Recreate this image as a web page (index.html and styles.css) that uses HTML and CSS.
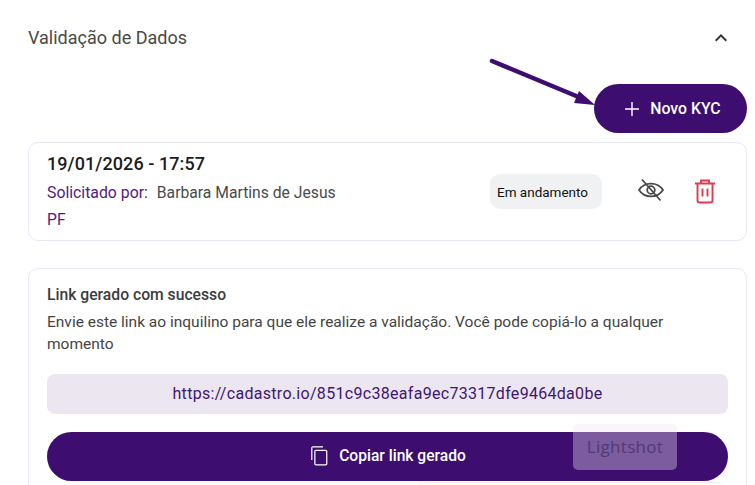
FILE: index.html
```html
<!DOCTYPE html>
<html lang="pt">
<head>
<meta charset="utf-8">
<title>Validação de Dados</title>
<link rel="stylesheet" href="styles.css">
</head>
<body>
<main class="panel">
  <header class="head">
    <h2 class="head-title">Validação de Dados</h2>
    <svg class="chevron" viewBox="0 0 24 24" width="24" height="24"><path d="M7.400 15.400 12 10.800l4.600 4.600L18 14l-6-6-6 6z" fill="#333"/></svg>
  </header>
  <div class="actions">
    <button class="new-btn">
      <svg viewBox="0 0 24 24" width="24" height="24"><path d="M19 12.700h-6.300V19h-1.400v-6.300H5v-1.400h6.300V5h1.400v6.300H19z" fill="#fff"/></svg>
      <span>Novo KYC</span>
    </button>
  </div>
  <section class="card kyc">
    <div class="kyc-info">
      <div class="kyc-date">19/01/2026 - 17:57</div>
      <div class="kyc-line"><span class="purple kyc-label">Solicitado por:</span><span class="kyc-name">Barbara Martins de Jesus</span></div>
      <div class="purple kyc-type">PF</div>
    </div>
    <div class="status">Em andamento</div>
    <svg class="eye" viewBox="0 0 26 26" width="26" height="26" fill="none" stroke="#4a4a4a" stroke-width="1.800"><path d="M1 13c2.800-4.300 6.800-6.400 12-6.400s9.200 2.100 12 6.400c-2.800 4.300-6.800 6.400-12 6.400S3.800 17.300 1 13z"/><circle cx="13" cy="13" r="3.800"/><path d="M4 2.500 22.500 23.500"/></svg>
    <svg class="trash" viewBox="0 0 24 26" width="24" height="26" fill="none" stroke="#dc3c50" stroke-width="1.900"><path d="M2 5.500h20M8 5.500V2.500h8v3M4.500 5.500v17q0 2 2 2h11q2 0 2-2v-17M9.500 10.500v8M14.500 10.500v8"/></svg>
  </section>
  <section class="card link-card">
    <h3 class="link-title">Link gerado com sucesso</h3>
    <p class="link-text">Envie este link ao inquilino para que ele realize a validação. Você pode copiá-lo a qualquer momento</p>
    <div class="link-url">https://cadastro.io/851c9c38eafa9ec73317dfe9464da0be</div>
    <button class="copy-btn">
      <svg viewBox="0 0 24 24" width="21" height="21"><path d="M16 1.500H4.500C3.400 1.500 2.500 2.400 2.500 3.500V17h1.400V2.900H16V1.500zm3 4H8C6.900 5.500 6 6.400 6 7.500v14c0 1.100.9 2 2 2h11c1.100 0 2-.9 2-2v-14c0-1.100-.9-2-2-2zm.6 16.600H7.400V6.900h12.200v15.200z" fill="#fff"/></svg>
      <span>Copiar link gerado</span>
    </button>
  </section>
</main>
<svg class="arrow" viewBox="0 0 110 50" width="110" height="50"><path d="M3 4 92 41" stroke="#3d0e70" stroke-width="4.500" stroke-linecap="round" fill="none"/><path d="M90 34 106 48 85 46z" fill="#3d0e70"/></svg>
<div class="peek"></div>
<div class="lightshot">Lightshot</div>
</body>
</html>
```
FILE: styles.css
```css
* { box-sizing: border-box; }
html, body { margin: 0; height: 100%; overflow: hidden; background: #fff; }
body { font-family: Roboto, sans-serif; color: #333; position: relative; }
.panel { width: 747px; padding: 0 0 0 28px; }
.head { display: flex; justify-content: space-between; align-items: center; height: 75px; padding-right: 14px; }
.head-title { margin: 0; font-size: 18px; font-weight: 400; color: #4a4a44; }
.chevron { display: block; }
.actions { display: flex; justify-content: flex-end; margin-top: 9px; }
.new-btn { display: flex; align-items: center; justify-content: center; gap: 6px; width: 153px; height: 49px; padding: 0; border: 0; border-radius: 25px; background: #3d0e70; color: #fff; font: 500 15.800px Roboto, sans-serif; }
.card { border: 1px solid #e9e7f1; border-radius: 10px; background: #fff; }
.kyc { display: flex; align-items: center; height: 99px; margin-top: 9px; padding: 0 29px 0 18px; }
.kyc-info { flex: 1; }
.kyc-date { font-size: 18px; font-weight: 500; color: #1c1c1c; line-height: 22px; letter-spacing: .08px; margin-top: -1px; }
.kyc-line { font-size: 15.700px; line-height: 20px; margin-top: 8px; }
.purple { color: #551a7c; }
.kyc-label { font-size: 15.800px; }
.kyc-name { margin-left: 9px; color: #4a4a4a; }
.kyc-type { font-size: 15.700px; line-height: 20px; margin-top: 7px; }
.status { width: 112px; height: 35px; display: flex; align-items: center; padding-left: 7px; background: #f0f1f3; border-radius: 10px; font-size: 13.500px; color: #111; margin-top: 0; }
.eye { margin: -3px 0 0 36px; }
.trash { margin: -2px 0 0 29px; }
.link-card { margin-top: 27px; padding: 16px 18px 0; height: 240px; }
.link-title { margin: 0; font-size: 15.700px; font-weight: 500; line-height: 20px; color: #3c3c3c; }
.link-text { margin: 6px 0 0; font-size: 15.500px; line-height: 22px; color: #444; }
.link-url { margin-top: 19px; height: 40px; display: flex; align-items: center; justify-content: center; background: #ebe6f0; border-radius: 8px; color: #40166f; font-size: 16px; letter-spacing: .3px; padding-bottom: 2px; }
.copy-btn { margin-top: 18px; width: 100%; height: 49px; display: flex; align-items: center; justify-content: center; gap: 9px; padding: 0 0 2px; border: 0; border-radius: 25px; background: #3d0e70; color: #fff; font: 500 15.600px Roboto, sans-serif; }
.arrow { position: absolute; left: 489px; top: 57px; }
.peek { position: absolute; left: 415px; top: 482px; width: 310px; height: 20px; border: 1px solid #eee; border-radius: 10px; background: #fff; }
.lightshot { position: absolute; left: 573px; top: 424px; width: 104px; height: 46px; display: flex; align-items: center; justify-content: center; border-radius: 5px; background: rgba(235,230,240,.36); color: #503a74; font: 17px "Open Sans", sans-serif; letter-spacing: .3px; padding-bottom: 2px; }
```
